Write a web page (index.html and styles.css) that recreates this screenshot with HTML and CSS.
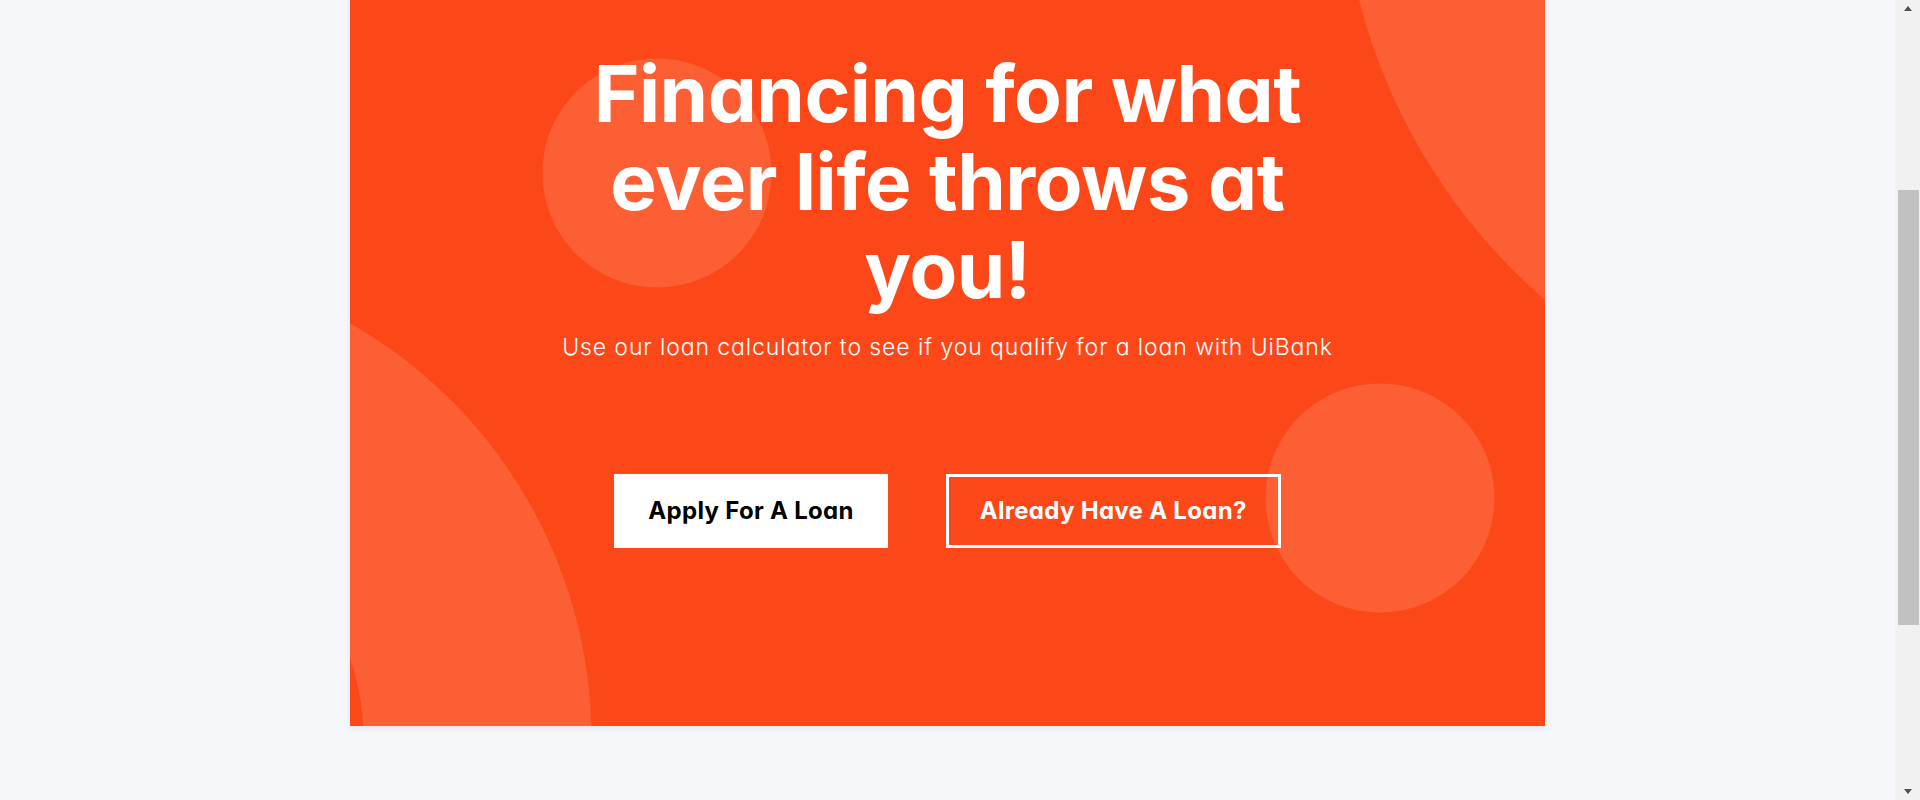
FILE: index.html
```html
<!DOCTYPE html>
<html lang="en">
<head>
<meta charset="utf-8">
<title>UiBank – Loans</title>
<link rel="stylesheet" href="styles.css">
</head>
<body>
<main class="page">
  <section class="hero">
    <h1 class="hero-title">Financing for what ever life throws at you!</h1>
    <p class="hero-sub">Use our loan calculator to see if you qualify for a loan with UiBank</p>
    <div class="hero-actions">
      <a class="btn btn-solid" href="#">Apply For A Loan</a>
      <a class="btn btn-outline" href="#">Already Have A Loan?</a>
    </div>
  </section>
  <footer class="page-foot"></footer>
</main>
<div class="scrollbar" aria-hidden="true">
  <span class="sb-arrow sb-up"></span>
  <span class="sb-thumb"></span>
  <span class="sb-arrow sb-down"></span>
</div>
<script src="script.js"></script>
</body>
</html>
```

FILE: styles.css
```css
* { box-sizing: border-box; }
html, body { margin: 0; }
body {
  background: #f6f7fb;
  font-family: Inter, "Open Sans", sans-serif;
}
.page {
  display: flex;
  flex-direction: column;
  padding-right: 25px;
}
.hero {
  width: 1195px;
  height: 1044px;
  margin: 0 auto;
  padding-top: 368px;
  display: flex;
  flex-direction: column;
  align-items: center;
  color: #fff;
  background-color: #fc4718;
  background-image:
    radial-gradient(circle 115px at 307px 491px, #fd5f35 99%, rgba(253,95,53,0) 100%),
    radial-gradient(circle 115px at 1030px 816px, #fd5f35 99%, rgba(253,95,53,0) 100%),
    radial-gradient(circle 591px at 1581px 171px, #fd5f35 99.8%, rgba(253,95,53,0) 100%),
    radial-gradient(circle 479px at -237px 1057px, rgba(253,95,53,0) 250px, #fd5f35 251px, #fd5f35 478px, rgba(253,95,53,0) 479px);
  box-shadow: 0 2px 5px rgba(150,175,220,0.25);
}
.hero-title {
  margin: 0;
  max-width: 780px;
  font-size: 78px;
  line-height: 88px;
  font-weight: 700;
  letter-spacing: -0.5px;
  text-align: center;
  font-feature-settings: "cv11" 1;
}
.hero-sub {
  margin: 20px 0 0;
  font-size: 23px;
  line-height: 27px;
  font-weight: 300;
  letter-spacing: 0.9px;
  font-feature-settings: "cv11" 1;
}
.hero-actions {
  display: flex;
  gap: 58px;
  margin-top: 113px;
}
.btn {
  display: block;
  padding: 20px 31px;
  border: 3px solid #fff;
  font-size: 24px;
  line-height: 28px;
  font-weight: 700;
  letter-spacing: 0.3px;
  text-decoration: none;
  font-feature-settings: "cv11" 1;
}
.btn-solid {
  background: #fff;
  color: #000;
}
.btn-outline {
  background: transparent;
  color: #fff;
}
.page-foot {
  height: 364px;
}

/* window scrollbar as it appears in the screenshot */
.scrollbar {
  position: fixed;
  top: 0;
  right: 0;
  width: 25px;
  height: 100vh;
  display: flex;
  flex-direction: column;
  align-items: center;
  background: #f1f1f1;
}
.sb-arrow {
  width: 0;
  height: 0;
  border-left: 4px solid transparent;
  border-right: 4px solid transparent;
}
.sb-up {
  margin-top: 6px;
  border-bottom: 5px solid #505050;
}
.sb-down {
  margin-top: auto;
  margin-bottom: 6px;
  border-top: 5px solid #505050;
}
.sb-thumb {
  margin-top: 179px;
  width: 21px;
  height: 435px;
  margin-left: 1px;
  background: #c1c1c1;
}
```

FILE: script.js
```js
window.scrollTo(0, 318);
window.addEventListener('load', function () { window.scrollTo(0, 318); });
```
